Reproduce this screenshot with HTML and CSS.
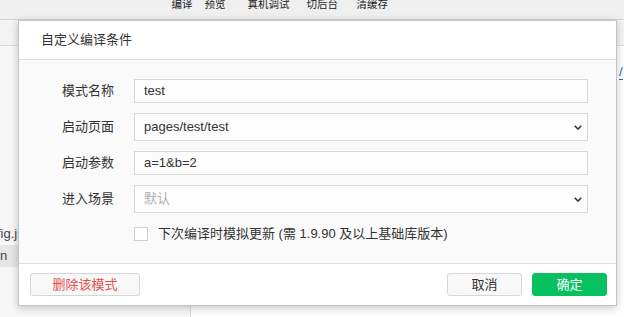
FILE: index.html
```html
<!DOCTYPE html>
<html lang="zh-CN">
<head>
    <meta charset="UTF-8">
    <title>自定义编译条件</title>
    <link rel="stylesheet" href="styles.css">
</head>
<body>
<div class="toolbar">
    <span class="tool t-compile">编译</span>
    <span class="tool t-preview">预览</span>
    <span class="tool t-device">真机调试</span>
    <span class="tool t-back">切后台</span>
    <span class="tool t-cache">清缓存</span>
</div>
<div class="workspace">
    <div class="sidebar">
        <div class="side-head"></div>
        <div class="files">
            <div class="file file-config">fig.json</div>
            <div class="file file-active">n</div>
        </div>
    </div>
    <div class="editor">
        <div class="tabs"></div>
        <div class="code"><span class="code-link">/</span></div>
    </div>
</div>

<div class="dialog">
    <div class="dialog-head">自定义编译条件</div>
    <div class="dialog-body">
        <div class="row">
            <span class="label">模式名称</span>
            <div class="input">test</div>
        </div>
        <div class="row">
            <span class="label">启动页面</span>
            <div class="input select">
                <span>pages/test/test</span>
                <svg class="chevron" width="8" height="5" viewBox="0 0 8 5"><path d="M0.7 0.7 L4 4 L7.3 0.7" fill="none" stroke="#333" stroke-width="1.6"/></svg>
            </div>
        </div>
        <div class="row">
            <span class="label">启动参数</span>
            <div class="input">a=1&amp;b=2</div>
        </div>
        <div class="row">
            <span class="label">进入场景</span>
            <div class="input select">
                <span class="placeholder">默认</span>
                <svg class="chevron" width="8" height="5" viewBox="0 0 8 5"><path d="M0.7 0.7 L4 4 L7.3 0.7" fill="none" stroke="#333" stroke-width="1.6"/></svg>
            </div>
        </div>
        <label class="row check-row">
            <span></span>
            <span class="check"><span class="box"></span>下次编译时模拟更新 (需 1.9.90 及以上基础库版本)</span>
        </label>
    </div>
    <div class="dialog-foot">
        <button class="btn btn-danger">删除该模式</button>
        <span class="spacer"></span>
        <button class="btn">取消</button>
        <button class="btn btn-primary">确定</button>
    </div>
</div>
</body>
</html>
```

FILE: styles.css
```css
body {
    margin: 0;
    width: 624px;
    height: 317px;
    overflow: hidden;
    font-family: "Liberation Sans", "Noto Sans CJK SC", sans-serif;
    font-size: 13px;
    color: #333;
    background: #fff;
    position: relative;
}
.toolbar {
    height: 19px;
    background: #efefef;
    border-bottom: 1px solid #d4d4d4;
    display: flex;
    align-items: flex-start;
    padding-left: 171.5px;
    overflow: hidden;
}
.tool {
    font-size: 10.5px;
    line-height: 11px;
    margin-top: -1px;
    color: #222;
    white-space: nowrap;
}
.t-preview { margin-left: 12px; }
.t-device { margin-left: 22px; }
.t-back { margin-left: 17px; }
.t-cache { margin-left: 18.5px; }

.workspace {
    display: flex;
    height: 297px;
}
.sidebar {
    width: 190px;
    border-right: 1px solid #dcdcdc;
    background: #f7f7f7;
}
.side-head {
    height: 25px;
    background: #f3f3f3;
    border-bottom: 1px solid #dcdcdc;
}
.files {
    padding-top: 177px;
}
.file {
    height: 22px;
    line-height: 22px;
    font-size: 13px;
    color: #444;
    white-space: nowrap;
    margin-left: -3px;
}
.file-active {
    background: #e6e6e6;
    margin-left: 0;
    padding-left: 0;
}
.editor {
    flex: 1;
    background: #fff;
}
.tabs {
    height: 25px;
    background: #f3f3f3;
    border-bottom: 1px solid #dcdcdc;
}
.code {
    padding: 18px 0 0 428px;
    line-height: 16px;
}
.code-link {
    color: #2a63c9;
    border-bottom: 1px solid #2a63c9;
}

.dialog {
    position: absolute;
    left: 18px;
    top: 20px;
    width: 597px;
    height: 284px;
    border: 1px solid #c4c4c4;
    background: #fff;
    box-shadow: 0 2px 8px rgba(0, 0, 0, 0.22);
    display: flex;
    flex-direction: column;
}
.dialog-head {
    height: 38px;
    line-height: 38px;
    padding-left: 22px;
    border-bottom: 1px solid #dedede;
}
.dialog-body {
    height: 204px;
    background: #fafafa;
    border-bottom: 1px solid #dedede;
    padding: 19px 28px 0 0;
    box-sizing: border-box;
}
.row {
    display: grid;
    grid-template-columns: 115px 1fr;
    align-items: center;
    margin-bottom: 10px;
}
.label {
    padding-left: 43px;
    line-height: 16px;
}
.input {
    height: 22px;
    line-height: 22px;
    border: 1px solid #d8d8d8;
    background: #fcfcfc;
    padding-left: 9px;
    color: #333;
}
.select {
    height: 26px;
    line-height: 26px;
    display: flex;
    align-items: center;
    justify-content: space-between;
    padding-right: 5px;
}
.placeholder {
    color: #b0b0b0;
}
.check-row {
    margin-top: 14px;
}
.check {
    display: flex;
    align-items: center;
    line-height: 14px;
}
.box {
    width: 12px;
    height: 12px;
    border: 1px solid #cfcfcf;
    background: #fff;
    margin-right: 10px;
}
.dialog-foot {
    flex: 1;
    display: flex;
    align-items: center;
    padding: 0 9px 0 11px;
    gap: 10px;
}
.spacer {
    flex: 1;
}
.btn {
    height: 23px;
    width: 75px;
    padding: 0;
    font-family: inherit;
    font-size: 13px;
    line-height: 21px;
    color: #333;
    background: #f8f8f8;
    border: 1px solid #d6d6d6;
    border-radius: 3px;
}
.btn-danger {
    width: 110px;
    color: #e4514b;
}
.btn-primary {
    background: #07c160;
    border-color: #07c160;
    color: #fff;
}
```
